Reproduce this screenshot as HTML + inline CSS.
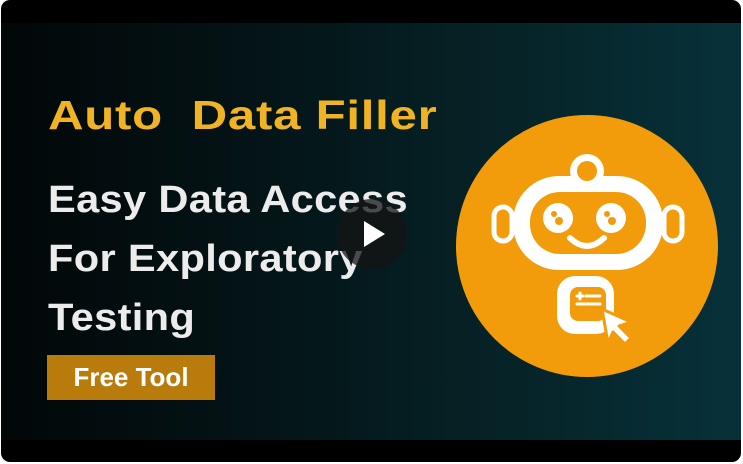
<!DOCTYPE html>
<html><head><meta charset="utf-8"><style>
html,body{margin:0;padding:0;background:#fff;}
body{width:743px;height:464px;position:relative;overflow:hidden;font-family:"Liberation Sans",sans-serif;}
.frame{position:absolute;left:1px;top:0;width:740px;height:462px;background:#000;border-radius:9px;overflow:hidden;}
.img{position:absolute;left:0;top:23px;width:740px;height:417px;background:linear-gradient(90deg,#020708 0%,#041417 35%,#062428 70%,#07313a 100%);}
.t{position:absolute;font-weight:bold;white-space:nowrap;transform-origin:0 0;}
.y{color:#f0b323;font-size:41px;left:47px;top:92px;letter-spacing:0.6px;transform:scaleX(1.2);}
.w{color:#ececec;font-size:38px;left:47px;letter-spacing:0.3px;transform:scaleX(1.095);}
.badge{position:absolute;left:46px;top:355px;width:168px;height:45px;background:#b97b0b;color:#fff;font-weight:bold;font-size:26px;line-height:45px;text-align:center;}
</style></head><body>
<div class="frame">
<div class="img"></div>
<div class="t y">Auto&nbsp; Data Filler</div>
<div class="t w" style="top:179px">Easy Data Access</div>
<div class="t w" style="top:238px">For Exploratory</div>
<div class="t w" style="top:297px">Testing</div>
<div class="badge">Free Tool</div>
</div>
<svg width="743" height="464" style="position:absolute;left:0;top:0">
<circle cx="587" cy="246" r="131" fill="#f39c0b"/>
<circle cx="587" cy="171" r="17" fill="#fff"/>
<rect x="513" y="176" width="150" height="94" rx="46" fill="#fff"/>
<rect x="530" y="192" width="116" height="62" rx="30" fill="#f39c0b"/>
<circle cx="587" cy="171" r="10" fill="#f39c0b"/>
<rect x="494" y="207" width="18" height="34" rx="9" fill="none" stroke="#fff" stroke-width="5"/>
<rect x="664" y="207" width="18" height="34" rx="9" fill="none" stroke="#fff" stroke-width="5"/>
<circle cx="558" cy="218" r="15" fill="#fff"/>
<circle cx="611" cy="218" r="15" fill="#fff"/>
<circle cx="554" cy="214" r="3" fill="#f39c0b"/><circle cx="559" cy="221" r="4" fill="#f39c0b"/>
<circle cx="607" cy="214" r="3" fill="#f39c0b"/><circle cx="612" cy="221" r="4" fill="#f39c0b"/>
<path d="M570 238 Q587 254 604 238" fill="none" stroke="#fff" stroke-width="6" stroke-linecap="round"/>
<rect x="557" y="276" width="57" height="58" rx="18" fill="#fff"/>
<rect x="570" y="287" width="36" height="34" rx="8" fill="#f39c0b"/>
<path d="M577 296h6M580 293v6M586 296h14M577 304h23" stroke="#fff" stroke-width="3" stroke-linecap="round"/>
<path d="M602 309 L631 322 L619 326 L631 338 L625 344 L613 332 L608 343 Z" fill="#fff" stroke="#f39c0b" stroke-width="3" stroke-linejoin="round"/>
<circle cx="372" cy="234" r="35" fill="rgba(20,20,20,0.75)"/>
<path d="M364 221 L385 234 L364 247 Z" fill="#fff"/>
</svg>
</body></html>
